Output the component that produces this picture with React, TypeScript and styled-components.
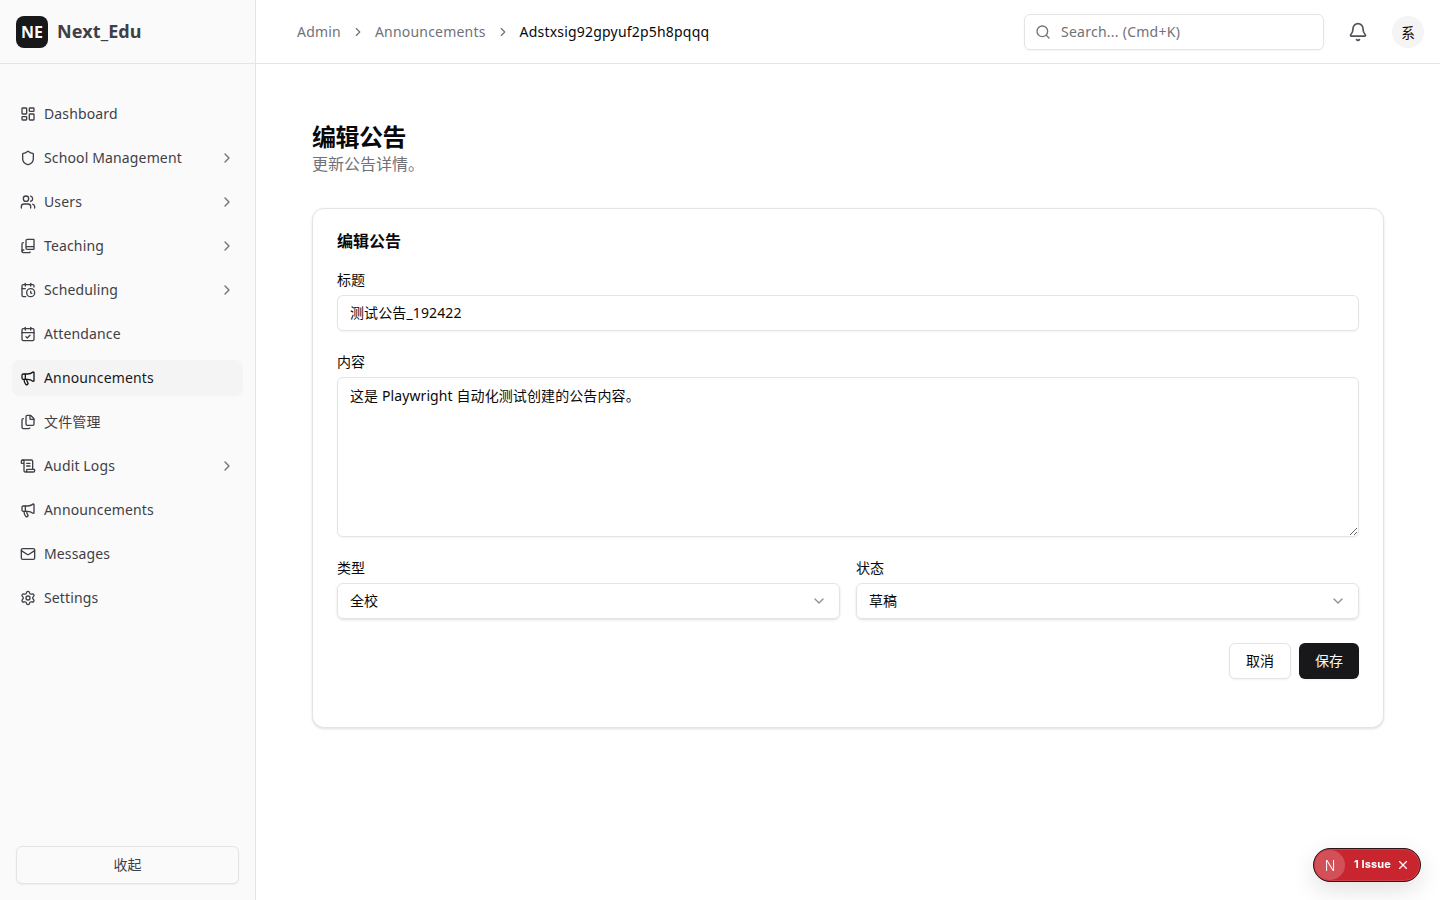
import React from "react";
import styled, { createGlobalStyle } from "styled-components";
import {
  LayoutDashboard, Shield, Users, BookCopy, CalendarClock, CalendarCheck, Megaphone, Files,
  ScrollText, Mail, Settings, ChevronRight, ChevronDown, Search, Bell, X,
} from "lucide-react";

const FONT = `"Noto Sans", "Noto Sans CJK SC", sans-serif`;

const Global = createGlobalStyle`
  * { box-sizing: border-box; }
  html, body { margin: 0; padding: 0; background: #fff; height: 100%; }
  body { font-family: ${FONT}; color: #09090b; overflow: hidden; }
`;

const Shell = styled.div`display: flex; height: 900px; width: 1440px;`;
const Sidebar = styled.aside`
  width: 256px; flex: none; display: flex; flex-direction: column;
  background: #fafafa; border-right: 1px solid #e4e4e7;
`;
const Brand = styled.div`
  height: 64px; flex: none; display: flex; align-items: center; gap: 8px; padding: 0 16px;
  border-bottom: 1px solid #e4e4e7;
`;
const LogoMark = styled.div`
  width: 32px; height: 32px; border-radius: 8px; background: #18181b; color: #fafafa;
  display: flex; align-items: center; justify-content: center; font-size: 16px; font-weight: 700;
`;
const BrandName = styled.span`font-size: 18px; font-weight: 700; line-height: 28px; color: #3f3f46; margin: 0 0 2px 1px; letter-spacing: 0.1px;`;
const Nav = styled.nav`flex: 1; display: flex; flex-direction: column; gap: 8px; padding: 32px 12px 0;`;
const NavItem = styled.div<{ $active?: boolean }>`
  height: 36px; display: flex; align-items: center; gap: 8px; padding: 0 8px; border-radius: 8px;
  font-size: 14px; line-height: 20px; letter-spacing: 0.14px;
  color: ${(p) => (p.$active ? "#18181b" : "#3f3f46")};
  background: ${(p) => (p.$active ? "#f4f4f5" : "transparent")};
  svg { flex: none; }
`;
const NavLabel = styled.span`flex: 1;`;
const SideFoot = styled.div`padding: 0 16px 16px; `;
const Collapse = styled.button`
  width: 100%; height: 38px; background: #fafafa; border: 1px solid #e4e4e7; border-radius: 6px;
  font: 400 14px/20px ${FONT}; color: #3f3f46;
  box-shadow: 0 1px 2px rgba(0,0,0,.05);
`;

const Main = styled.div`flex: 1; min-width: 0; display: flex; flex-direction: column;`;
const Topbar = styled.header`
  height: 64px; flex: none; display: flex; align-items: center; padding: 0 16px 0 41px;
  border-bottom: 1px solid #e4e4e7; background: #fff;
`;
const Crumbs = styled.div`flex: 1; display: flex; align-items: center; gap: 10px; font-size: 14px; line-height: 20px; color: #71717a; letter-spacing: 0.2px;`;
const Crumb = styled.span<{ $current?: boolean }>`color: ${(p) => (p.$current ? "#09090b" : "#71717a")};`;
const SearchBox = styled.div`
  width: 300px; height: 36px; display: flex; align-items: center; gap: 10px; padding: 0 10px;
  border: 1px solid #e4e4e7; border-radius: 6px; box-shadow: 0 1px 2px rgba(0,0,0,.05);
  font-size: 14px; color: #71717a; margin-right: 16px; letter-spacing: 0.25px;
`;
const IconBtn = styled.div`width: 36px; height: 36px; display: flex; align-items: center; justify-content: center; color: #52525b; margin-right: 16px;`;
const Avatar = styled.div`
  width: 32px; height: 32px; border-radius: 50%; background: #f4f4f5; display: flex; align-items: center;
  justify-content: center; font-size: 14px; color: #09090b;
`;

const Content = styled.main`flex: 1; padding: 58px 56px 0;`;
const PageTitle = styled.h1`margin: 0; font-size: 24px; line-height: 30px; font-weight: 700; color: #09090b; letter-spacing: -0.5px;`;
const PageSub = styled.p`margin: 0; font-size: 16px; line-height: 24px; color: #71717a;`;
const Card = styled.section`
  margin-top: 32px; height: 520px; border: 1px solid #e4e4e7; border-radius: 12px; background: #fff;
  box-shadow: 0 1px 3px rgba(0,0,0,.1), 0 1px 2px -1px rgba(0,0,0,.1); padding: 24px;
`;
const CardTitle = styled.h2`margin: 0; font-size: 16px; line-height: 16px; font-weight: 600; color: #09090b;`;
const Field = styled.div`display: flex; flex-direction: column; gap: 8px; min-width: 0;`;
const Label = styled.label`font-size: 14px; line-height: 14px; font-weight: 400; color: #09090b;`;
const Input = styled.input`
  width: 100%; height: 36px; padding: 3px 12px 5px; border: 1px solid #e4e4e7; border-radius: 6px; background: #fff;
  font: 14px/20px ${FONT}; letter-spacing: 0.12px; color: #09090b; outline: none; box-shadow: 0 1px 2px rgba(0,0,0,.05);
`;
const TextArea = styled.textarea`
  display: block; width: 100%; height: 160px; padding: 8px 12px; border: 1px solid #e4e4e7; border-radius: 6px;
  background: #fff; font: 14px/20px ${FONT}; letter-spacing: 0.1px; color: #09090b; outline: none; box-shadow: 0 1px 2px rgba(0,0,0,.05);
`;
const Stack = styled.div`display: flex; flex-direction: column; gap: 24px; margin-top: 24px;`;
const Row = styled.div`display: grid; grid-template-columns: 1fr 1fr; gap: 16px;`;
const Select = styled.div`
  height: 36px; display: flex; align-items: center; justify-content: space-between; padding: 0 12px;
  border: 1px solid #e4e4e7; border-radius: 6px; font-size: 14px; color: #09090b;
  box-shadow: 0 1px 3px rgba(0,0,0,.1), 0 1px 2px -1px rgba(0,0,0,.1);
  svg { color: #8f8f96; }
`;
const SelectValue = styled.span`margin-bottom: 2px;`;
const Actions = styled.div`display: flex; justify-content: flex-end; gap: 8px;`;
const Btn = styled.button<{ $primary?: boolean }>`
  height: 36px; padding: 0 16px; border-radius: 6px; font: 400 14px/20px ${FONT};
  border: ${(p) => (p.$primary ? "0" : "1px solid #e4e4e7")};
  background: ${(p) => (p.$primary ? "#18181b" : "#fff")};
  color: ${(p) => (p.$primary ? "#fafafa" : "#09090b")};
  box-shadow: 0 1px 2px rgba(0,0,0,.05);
`;
const Issue = styled.div`
  position: fixed; left: 1313px; top: 848px; width: 108px; height: 34px; border-radius: 17px;
  background: #c9252f; border: 1px solid #2a1416;
  box-shadow: 0 0 0 1px rgba(255,255,255,.12) inset, 0 8px 24px rgba(0,0,0,.12);
  display: flex; align-items: center; color: #fff; padding: 0 0 0 1px;
`;
const IssueLogo = styled.div`
  width: 30px; height: 30px; border-radius: 50%; background: rgba(255,255,255,.2); display: flex; align-items: center;
  justify-content: center; font: 300 14px Inter, sans-serif; margin-right: 9px;
`;
const IssueText = styled.span`font: 700 11px/16px Inter, sans-serif; margin: 0 5px 2px 0; white-space: nowrap; letter-spacing: 0.1px;`;

const items: { label: string; Icon: typeof Shield; more?: boolean; active?: boolean }[] = [
  { label: "Dashboard", Icon: LayoutDashboard },
  { label: "School Management", Icon: Shield, more: true },
  { label: "Users", Icon: Users, more: true },
  { label: "Teaching", Icon: BookCopy, more: true },
  { label: "Scheduling", Icon: CalendarClock, more: true },
  { label: "Attendance", Icon: CalendarCheck },
  { label: "Announcements", Icon: Megaphone, active: true },
  { label: "文件管理", Icon: Files },
  { label: "Audit Logs", Icon: ScrollText, more: true },
  { label: "Announcements", Icon: Megaphone },
  { label: "Messages", Icon: Mail },
  { label: "Settings", Icon: Settings },
];

export default function App() {
  return (
    <Shell>
      <Global />
      <Sidebar>
        <Brand>
          <LogoMark>NE</LogoMark>
          <BrandName>Next_Edu</BrandName>
        </Brand>
        <Nav>
          {items.map(({ label, Icon, more, active }, i) => (
            <NavItem key={i} $active={active}>
              <Icon size={16} strokeWidth={2} />
              <NavLabel>{label}</NavLabel>
              {more && <ChevronRight size={16} color="#71717a" />}
            </NavItem>
          ))}
        </Nav>
        <SideFoot><Collapse>收起</Collapse></SideFoot>
      </Sidebar>
      <Main>
        <Topbar>
          <Crumbs>
            <Crumb>Admin</Crumb>
            <ChevronRight size={14} />
            <Crumb>Announcements</Crumb>
            <ChevronRight size={14} />
            <Crumb $current>Adstxsig92gpyuf2p5h8pqqq</Crumb>
          </Crumbs>
          <SearchBox><Search size={16} />Search... (Cmd+K)</SearchBox>
          <IconBtn><Bell size={20} /></IconBtn>
          <Avatar>系</Avatar>
        </Topbar>
        <Content>
          <PageTitle>编辑公告</PageTitle>
          <PageSub>更新公告详情。</PageSub>
          <Card>
            <CardTitle>编辑公告</CardTitle>
            <Stack>
              <Field>
                <Label>标题</Label>
                <Input readOnly value="测试公告_192422" />
              </Field>
              <Field>
                <Label>内容</Label>
                <TextArea readOnly value="这是 Playwright 自动化测试创建的公告内容。" />
              </Field>
              <Row>
                <Field>
                  <Label>类型</Label>
                  <Select><SelectValue>全校</SelectValue><ChevronDown size={16} /></Select>
                </Field>
                <Field>
                  <Label>状态</Label>
                  <Select><SelectValue>草稿</SelectValue><ChevronDown size={16} /></Select>
                </Field>
              </Row>
              <Actions>
                <Btn>取消</Btn>
                <Btn $primary>保存</Btn>
              </Actions>
            </Stack>
          </Card>
        </Content>
      </Main>
      <Issue>
        <IssueLogo>N</IssueLogo>
        <IssueText>1 Issue</IssueText>
        <X size={14} />
      </Issue>
    </Shell>
  );
}
